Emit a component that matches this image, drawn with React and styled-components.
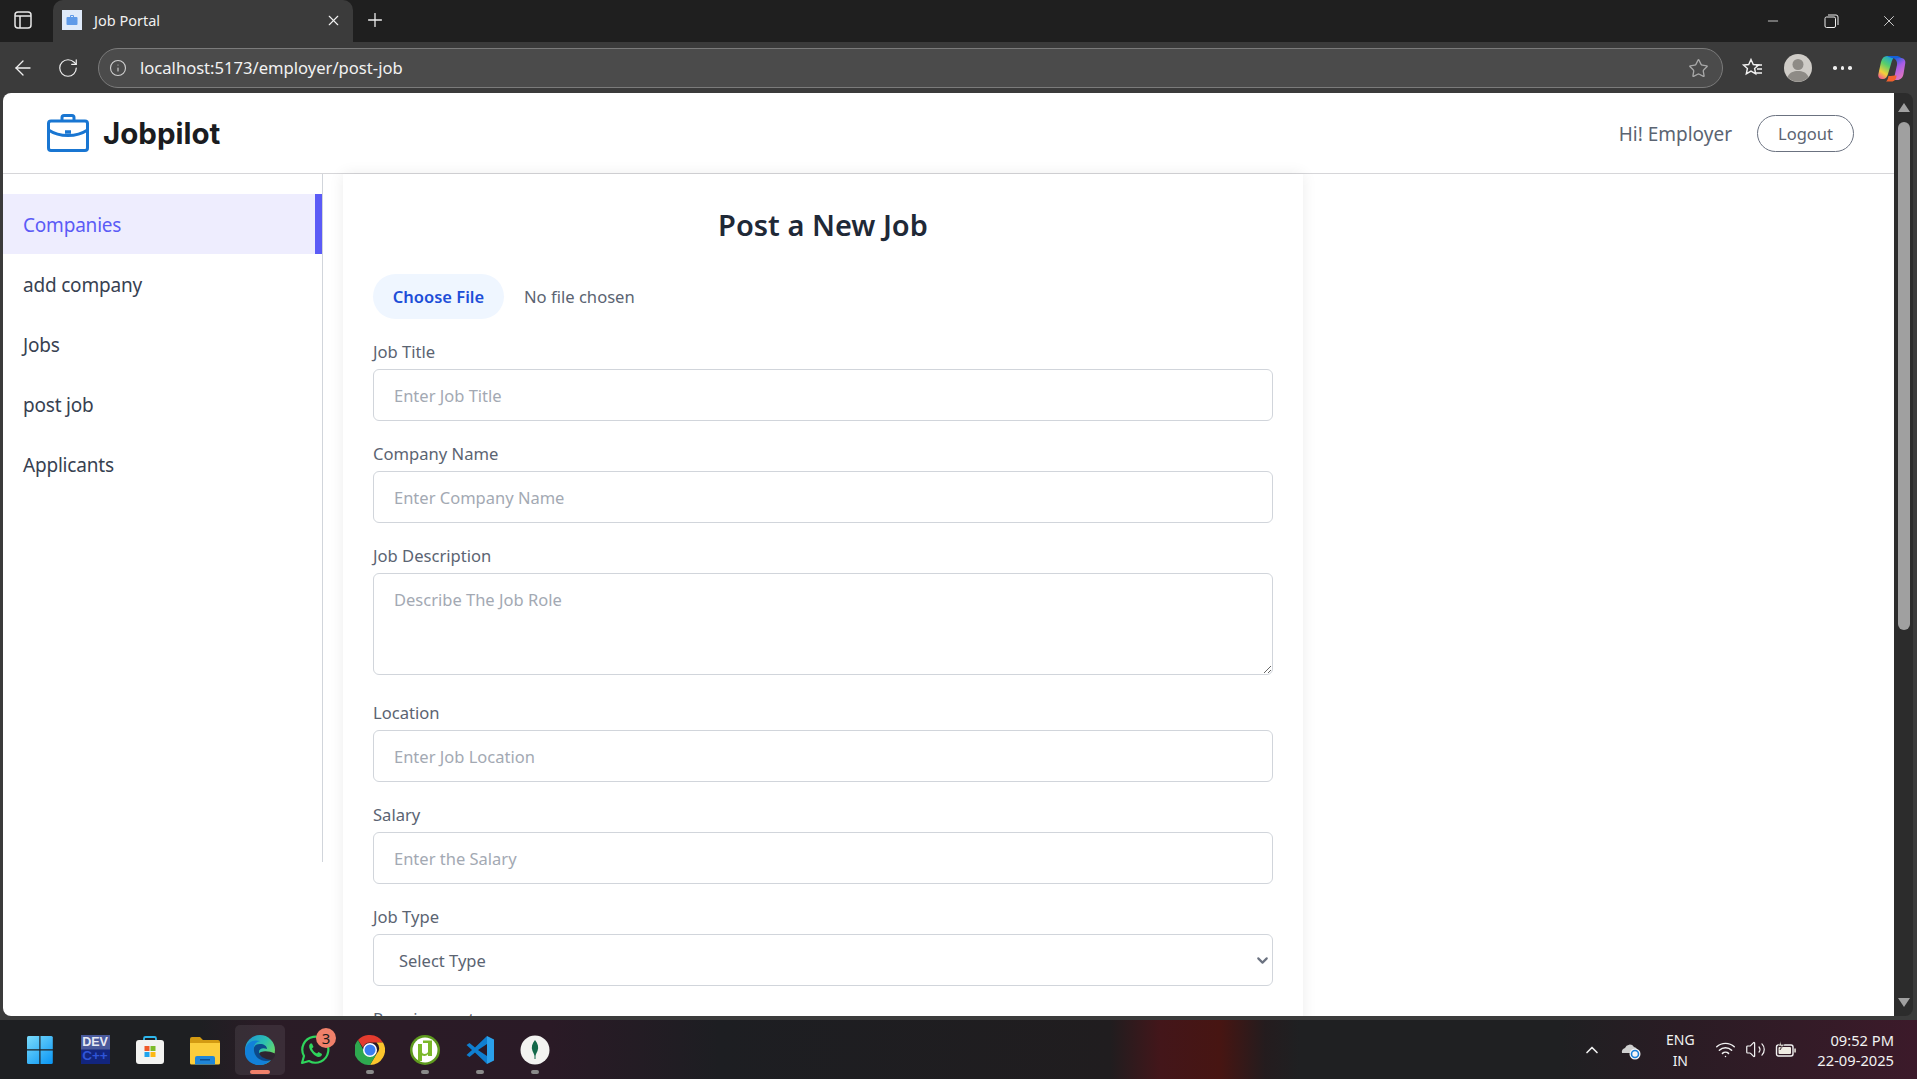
import React from 'react';
import styled, { createGlobalStyle } from 'styled-components';
import { ChevronUp, ChevronDown, Plus, Star, X, Minus, ArrowLeft, RotateCw, Info, Wifi, Volume2 } from 'lucide-react';

const GlobalStyle = createGlobalStyle`
  html, body {
    margin: 0;
    padding: 0;
    height: 100%;
    overflow: hidden;
    background: #3b3b3b;
  }
  * {
    box-sizing: border-box;
  }
`;

const uiFont = `"Noto Sans", "Open Sans", sans-serif`;
const sideItems = ['Companies', 'add company', 'Jobs', 'post job', 'Applicants'];

const Desktop = () => (
  <>
    <GlobalStyle />
    <Screen>
      <TabStrip>
        <StripButton>
          <svg width="20" height="20" viewBox="0 0 20 20" fill="none" stroke="#e8e8e8" strokeWidth="1.5">
            <rect x="2" y="2" width="16" height="16" rx="3" />
            <path d="M2 6h16M7 6v12" />
          </svg>
        </StripButton>
        <Tab>
          <Favicon>
            <svg width="12" height="12" viewBox="0 0 24 24" fill="#5f9ae8">
              <path d="M8 6V4a2 2 0 0 1 2-2h4a2 2 0 0 1 2 2v2h5a2 2 0 0 1 2 2v12a2 2 0 0 1-2 2H3a2 2 0 0 1-2-2V8a2 2 0 0 1 2-2zm2 0h4V4h-4z" />
            </svg>
          </Favicon>
          <TabTitle>Job Portal</TabTitle>
          <X size={17} color="#f2f2f2" strokeWidth={1.6} />
        </Tab>
        <NewTab>
          <Plus size={22} color="#eeeeee" strokeWidth={1.4} />
        </NewTab>
        <WindowControls>
          <WindowControl><Minus size={16} color="#eee" strokeWidth={1.2} /></WindowControl>
          <WindowControl>
            <svg width="15" height="15" viewBox="0 0 15 15" fill="none" stroke="#eee" strokeWidth="1">
              <rect x="1" y="3" width="10.5" height="10.5" rx="1.5" />
              <path d="M4 1h8a2 2 0 0 1 2 2v8" />
            </svg>
          </WindowControl>
          <WindowControl><X size={18} color="#eee" strokeWidth={1.1} /></WindowControl>
        </WindowControls>
      </TabStrip>

      <Toolbar>
        <ToolIcon><ArrowLeft size={24} color="#f0f0f0" strokeWidth={1.3} /></ToolIcon>
        <ToolIcon><RotateCw size={22} color="#f0f0f0" strokeWidth={1.3} /></ToolIcon>
        <AddressBar>
          <Info size={18} color="#cfcfcf" strokeWidth={1.5} />
          <AddressText>localhost:5173/employer/post-job</AddressText>
          <Star size={21} color="#a8a8a8" strokeWidth={1.5} />
        </AddressBar>
        <ToolRight>
          <svg width="22" height="22" viewBox="0 0 22 22" fill="none" stroke="#f2f2f2" strokeWidth="1.4">
            <path d="M10 2.500l2.300 5 5.200.5-3.900 3.500 1.100 5.300-4.700-2.700-4.700 2.700 1.100-5.300L2.500 8l5.200-.5z" />
            <path d="M15 8h6M16 12h5M15 16h6" />
          </svg>
          <Avatar>
            <svg width="28" height="28" viewBox="0 0 28 28">
              <circle cx="14" cy="14" r="14" fill="#cfccc7" />
              <circle cx="14" cy="10.500" r="5.500" fill="#8e8b86" />
              <path d="M3.500 23c2-4.500 6-6 10.500-6s8.500 1.500 10.500 6a14 14 0 0 1-21 0z" fill="#8e8b86" />
            </svg>
          </Avatar>
          <Dots>
            <i /><i /><i />
          </Dots>
          <CopilotMark>
            <svg width="28" height="27" viewBox="0 0 28 27">
              <defs>
                <linearGradient id="copA" x1="0.7" y1="0" x2="0.2" y2="1">
                  <stop offset="0" stopColor="#18a0dc" />
                  <stop offset="0.4" stopColor="#58cf6a" />
                  <stop offset="0.75" stopColor="#f4cf3a" />
                  <stop offset="1" stopColor="#f0608a" />
                </linearGradient>
                <linearGradient id="copB" x1="0.3" y1="0" x2="0.8" y2="1">
                  <stop offset="0" stopColor="#1560d8" />
                  <stop offset="0.4" stopColor="#a65ce8" />
                  <stop offset="1" stopColor="#ec7ab8" />
                </linearGradient>
              </defs>
              <path d="M9 1h9c-3 1-4 4-5 8l-3 10c-.8 3-2.500 5-5 5H4c-2.800 0-4.300-2.300-3.600-5L3 7c1-3.800 3-6 6-6z" fill="url(#copA)" />
              <path d="M15 3h8c2.800 0 4.700 2.300 4.300 5l-1.800 11c-.6 3.500-3 6-6.500 6h-7c3 0 4.500-2.500 5-6l2-9c.5-2.500-.5-6-4-7z" fill="url(#copB)" />
              <path d="M9 1h9c2 0 4 .5 5 2h-8c-1.500 0-3-.5-6-2z" fill="#1560d8" />
              <path d="M10.500 21c3 0 5.500-.5 8-.5 0 3-1.500 5.500-4 6H8c1.500-1 2-3 2.500-5.500z" fill="#f2622e" />
            </svg>
          </CopilotMark>
        </ToolRight>
      </Toolbar>

      <Viewport>
        <Page>
          <Header>
            <Brand>
              <svg width="42" height="38" viewBox="0 0 42 38" fill="none" stroke="#1976d2" strokeWidth="3">
                <path d="M15 7V3.500A2 2 0 0 1 17 1.500h8a2 2 0 0 1 2 2V7" />
                <rect x="1.500" y="7" width="39" height="29.500" rx="2.500" />
                <path d="M1.500 16c6 4 12 5.500 19.500 5.500S34.500 20 40.500 16" />
                <path d="M18 18h6" strokeWidth="3.500" />
              </svg>
              <BrandName>Jobpilot</BrandName>
            </Brand>
            <HeaderRight>
              <Greeting>Hi! Employer</Greeting>
              <LogoutButton>Logout</LogoutButton>
            </HeaderRight>
          </Header>
          <Body>
            <Sidebar>
              {sideItems.map((item, i) => (
                <SideItem key={item} $active={i === 0}>{item}</SideItem>
              ))}
            </Sidebar>
            <Card>
              <Title>Post a New Job</Title>
              <FileRow>
                <FileButton>Choose File</FileButton>
                <FileStatus>No file chosen</FileStatus>
              </FileRow>
              <Field>
                <Label>Job Title</Label>
                <Input placeholder="Enter Job Title" />
              </Field>
              <Field>
                <Label>Company Name</Label>
                <Input placeholder="Enter Company Name" />
              </Field>
              <Field>
                <Label>Job Description</Label>
                <TextArea placeholder="Describe The Job Role" />
              </Field>
              <Field>
                <Label>Location</Label>
                <Input placeholder="Enter Job Location" />
              </Field>
              <Field>
                <Label>Salary</Label>
                <Input placeholder="Enter the Salary" />
              </Field>
              <Field>
                <Label>Job Type</Label>
                <SelectWrap>
                  <SelectBox>
                    <option>Select Type</option>
                  </SelectBox>
                  <SelectChevron>
                    <ChevronDown size={17} color="#6b7280" strokeWidth={3} />
                  </SelectChevron>
                </SelectWrap>
              </Field>
              <Field>
                <Label>Requirements</Label>
              </Field>
            </Card>
          </Body>
        </Page>
        <ScrollBar>
          <ScrollArrow />
          <ScrollThumb />
          <ScrollArrow $down />
        </ScrollBar>
      </Viewport>

      <Taskbar>
        <TaskIcons>
          <TaskSlot>
            <svg width="30" height="30" viewBox="0 0 30 30">
              <defs>
                <linearGradient id="winTile" gradientUnits="userSpaceOnUse" x1="2" y1="1" x2="26" y2="29">
                  <stop offset="0" stopColor="#7bdcfc" />
                  <stop offset="1" stopColor="#0c97f4" />
                </linearGradient>
              </defs>
              <g fill="url(#winTile)">
                <path d="M2 2.500A1.500 1.500 0 0 1 3.500 1h10.800v13.300H2z" />
                <path d="M15.500 1h10.800a1.500 1.500 0 0 1 1.500 1.500v11.800H15.500z" />
                <path d="M2 15.500h12.300V29H3.500A1.500 1.500 0 0 1 2 27.500z" />
                <path d="M15.500 15.500h12.300v12A1.500 1.500 0 0 1 26.300 29H15.500z" />
              </g>
            </svg>
          </TaskSlot>
          <TaskSlot>
            <DevBadge>
              <span>DEV</span>
              <b>C++</b>
            </DevBadge>
          </TaskSlot>
          <TaskSlot>
            <svg width="30" height="30" viewBox="0 0 30 30">
              <path d="M9 6V3.500A1.500 1.500 0 0 1 10.500 2h9A1.500 1.500 0 0 1 21 3.500V6" fill="none" stroke="#2fb8ee" strokeWidth="1.800" />
              <rect x="1" y="5" width="28" height="24" rx="3" fill="#f3f3f1" />
              <rect x="9.500" y="11" width="5" height="5" fill="#ef5a2a" />
              <rect x="15.500" y="11" width="5" height="5" fill="#7cbb2a" />
              <rect x="9.500" y="17" width="5" height="5" fill="#1fa4ee" />
              <rect x="15.500" y="17" width="5" height="5" fill="#fdb813" />
            </svg>
          </TaskSlot>
          <TaskSlot>
            <svg width="30" height="30" viewBox="0 0 30 30">
              <path d="M0 4a2 2 0 0 1 2-2h8l3 3h15a2 2 0 0 1 2 2v4H0z" fill="#d39a12" />
              <path d="M0 8h30v20a1.500 1.500 0 0 1-1.500 1.500h-27A1.500 1.500 0 0 1 0 28z" fill="#fbcd3c" />
              <path d="M5 29.500V23a2 2 0 0 1 2-2h16a2 2 0 0 1 2 2v6.500z" fill="#1f86d8" />
              <rect x="10" y="24" width="10" height="1.500" fill="#0c4f92" />
            </svg>
          </TaskSlot>
          <TaskSlot $active>
            <svg width="30" height="30" viewBox="0 0 30 30">
              <defs>
                <linearGradient id="edgeTop" x1="0" y1="0" x2="1" y2="0.700">
                  <stop offset="0" stopColor="#1b8fd8" />
                  <stop offset="0.55" stopColor="#2cc0b0" />
                  <stop offset="1" stopColor="#74de5a" />
                </linearGradient>
              </defs>
              <circle cx="15" cy="15" r="15" fill="url(#edgeTop)" />
              <path d="M16 17c4-1.500 9-.5 14 1.500v2c-1 2.500-3 4.500-4 5-6 1-12-2-12-6 0-1 .5-2 2-2.500z" fill="#2e2530" />
              <path d="M0 17C0 8 8 4 15 6c-5 1-7 5-6 10 1 7 9 11 17 9a15 15 0 0 1-11 5C6 30 0 25 0 17z" fill="#1280d8" />
              <path d="M9 16c-1-5 2-7 6-7 4 0 7 2 7 5-4-1.500-8-.5-8 3 0 4 5 7 12 8-8 3-16-1.500-17-9z" fill="#0c4a8c" />
            </svg>
            <Marker $active />
          </TaskSlot>
          <TaskSlot>
            <svg width="30" height="30" viewBox="0 0 30 30" fill="none">
              <path d="M2 28l2-7A13 13 0 1 1 9 26z" stroke="#2fd45c" strokeWidth="2.200" strokeLinejoin="round" />
              <path d="M10.500 8.500c-1.500 1-2 3-.5 6s5 7 8.500 7.500c2 0 3.500-1 3.500-3l-3.500-2-1.500 1.500c-2-.5-4-2.500-5-5l1.500-1.500-1.500-3.500z" fill="#2fd45c" />
            </svg>
            <Badge>3</Badge>
          </TaskSlot>
          <TaskSlot>
            <svg width="30" height="30" viewBox="0 0 30 30">
              <path d="M15 0a15 15 0 0 1 13 7.500H15a7.500 7.500 0 0 0-7 5L3 5A15 15 0 0 1 15 0z" fill="#e33b2e" />
              <path d="M28 7.500A15 15 0 0 1 15 30l6.500-11a7.500 7.500 0 0 0 0-11.500z" fill="#fbc52c" />
              <path d="M3 5l6.500 12A7.500 7.500 0 0 0 21.500 19L15 30A15 15 0 0 1 3 5z" fill="#2ea84f" />
              <circle cx="15" cy="15" r="7" fill="#fff" />
              <circle cx="15" cy="15" r="5.500" fill="#3a7df0" />
            </svg>
            <Marker />
          </TaskSlot>
          <TaskSlot>
            <svg width="30" height="30" viewBox="0 0 30 30">
              <circle cx="15" cy="15" r="15" fill="#5e9a1e" />
              <circle cx="15" cy="15" r="12.500" fill="#fff" />
              <path d="M8 9h4v8c0 2.500 5 2.500 6 0V8h4v13h-4v-2c-1 2-4 2.500-6 1.500V26H8z" fill="#7bb82a" />
              <path d="M13 5.500h9V8h-9z" fill="#7bb82a" />
            </svg>
            <Marker />
          </TaskSlot>
          <TaskSlot>
            <svg width="30" height="30" viewBox="0 0 30 30">
              <path d="M22 1L10 12.500 4.500 8 1.500 10 7 15l-5.500 5 3 2 5.500-4.500L22 29v-8l-9-6 9-6z" fill="#0f7fd0" />
              <path d="M22 1l7 3.500v21L22 29z" fill="#2aa0ea" />
            </svg>
            <Marker />
          </TaskSlot>
          <TaskSlot>
            <svg width="30" height="30" viewBox="0 0 30 30">
              <circle cx="15" cy="15" r="14.500" fill="#f3f3f1" />
              <path d="M15 5c3 3.500 4 7.500 2.500 11-.8 2-1.700 3-2 5v3h-1v-3c-.3-2-1.200-3-2-5-1.500-3.500-.5-7.500 2.500-11z" fill="#13684a" />
            </svg>
            <Marker />
          </TaskSlot>
        </TaskIcons>
        <Tray>
          <ChevronUp size={20} color="#f0f0f0" strokeWidth={2} />
          <TrayCloud>
            <svg width="22" height="20" viewBox="0 0 22 20">
              <path d="M2 13a4 4 0 0 1 3-5 5 5 0 0 1 9-1 4 4 0 0 1 3 6z" fill="#cfcfcf" />
              <circle cx="15" cy="14" r="5.500" fill="#f5f5f5" />
              <circle cx="15" cy="14" r="3.500" fill="none" stroke="#1a7fd8" strokeWidth="1.600" />
            </svg>
          </TrayCloud>
          <Lang>
            <span>ENG</span>
            <span>IN</span>
          </Lang>
          <TrayIcons>
            <Wifi size={21} color="#f2f2f2" strokeWidth={1.7} />
            <Volume2 size={21} color="#f2f2f2" strokeWidth={1.4} />
            <svg width="22" height="20" viewBox="0 0 22 20" fill="#f0ede4" stroke="#f2f2f2" strokeWidth="1">
              <rect x="1.500" y="5" width="16.500" height="11" rx="2" fill="none" strokeWidth="1.400" />
              <rect x="3.500" y="7" width="12.500" height="7" rx="1" stroke="none" />
              <rect x="19.300" y="8.500" width="1.500" height="4" stroke="none" />
              <path d="M6 1L3.500 6h3L5 10l4-5.500H6z" stroke="#2c1d24" strokeWidth="0.600" />
            </svg>
          </TrayIcons>
          <Clock>
            <span>09:52 PM</span>
            <span>22-09-2025</span>
          </Clock>
        </Tray>
      </Taskbar>
    </Screen>
  </>
);

const Screen = styled.div`
  width: 1917px;
  height: 1079px;
  display: flex;
  flex-direction: column;
  overflow: hidden;
  background: #3b3b3b;
  font-family: ${uiFont};
`;

const TabStrip = styled.div`
  height: 42px;
  flex: none;
  display: flex;
  align-items: center;
  background: #1f1f1f;
`;

const StripButton = styled.div`
  width: 53px;
  height: 42px;
  padding: 0 0 2px 13px;
  display: flex;
  align-items: center;
`;

const Tab = styled.div`
  width: 300px;
  height: 42px;
  padding: 0 11px 2px 9px;
  display: flex;
  align-items: center;
  background: #3b3b3b;
  border-radius: 10px 10px 0 0;
`;

const Favicon = styled.div`
  width: 20px;
  height: 20px;
  margin-right: 12px;
  display: flex;
  align-items: center;
  justify-content: center;
  background: #dfeafa;
`;

const TabTitle = styled.span`
  flex: 1;
  padding-bottom: 1px;
  font-size: 14.5px;
  color: #f0f0f0;
`;

const NewTab = styled.div`
  margin: 0 0 2px 11px;
  display: flex;
`;

const WindowControls = styled.div`
  margin-left: auto;
  margin-right: -1px;
  display: flex;
`;

const WindowControl = styled.div`
  width: 58px;
  height: 40px;
  display: flex;
  align-items: center;
  justify-content: center;
`;

const Toolbar = styled.div`
  height: 51px;
  flex: none;
  padding-top: 1px;
  display: flex;
  align-items: center;
  background: #3b3b3b;
`;

const ToolIcon = styled.div`
  width: 45px;
  flex: none;
  display: flex;
  justify-content: center;
`;

const AddressBar = styled.div`
  width: 1625px;
  height: 40px;
  flex: none;
  margin-left: 8px;
  padding: 0 13px 0 10px;
  display: flex;
  align-items: center;
  background: #4b4b4b;
  border: 1px solid #7b7b7b;
  border-radius: 20px;
`;

const AddressText = styled.span`
  flex: 1;
  margin-left: 13px;
  padding-bottom: 2px;
  font-size: 16.6px;
  color: #f2f2f2;
`;

const ToolRight = styled.div`
  flex: 1;
  padding-left: 18px;
  display: flex;
  align-items: center;
  gap: 21px;
`;

const Avatar = styled.div`
  display: flex;
`;

const Dots = styled.div`
  display: flex;
  gap: 4px;

  i {
    width: 3.500px;
    height: 3.500px;
    border-radius: 50%;
    background: #eee;
  }
`;

const CopilotMark = styled.div`
  margin-left: 5px;
  display: flex;
`;

const Viewport = styled.div`
  flex: 1;
  min-height: 0;
  padding: 0 4px 4px 3px;
  display: flex;
  background: #3b3b3b;
`;

const Page = styled.main`
  flex: 1;
  height: 923px;
  overflow: hidden;
  background: #fff;
  border-radius: 8px 0 0 8px;
`;

const Header = styled.header`
  height: 81px;
  padding: 0 40px 0 44px;
  display: flex;
  align-items: center;
  justify-content: space-between;
  border-bottom: 1px solid #d6d6d9;
`;

const Brand = styled.div`
  display: flex;
  align-items: center;
  gap: 14px;
`;

const BrandName = styled.h1`
  margin: 0;
  font-family: Inter, sans-serif;
  font-size: 29.5px;
  font-weight: 700;
  color: #1a1c20;
`;

const HeaderRight = styled.div`
  display: flex;
  align-items: center;
  gap: 25px;
`;

const Greeting = styled.span`
  padding-top: 1px;
  font-size: 19px;
  color: #5b6472;
`;

const LogoutButton = styled.button`
  width: 97px;
  height: 37px;
  padding: 0;
  font-family: inherit;
  font-size: 16.5px;
  color: #5b6472;
  background: #fff;
  border: 1px solid #6b7280;
  border-radius: 19px;
`;

const Body = styled.div`
  display: flex;
  align-items: flex-start;
`;

const Sidebar = styled.aside`
  width: 320px;
  height: 688px;
  flex: none;
  padding-top: 20px;
  border-right: 1px solid #d1d5db;
`;

const SideItem = styled.div`
  height: 60px;
  padding: 2px 0 0 20px;
  display: flex;
  align-items: center;
  font-size: 19px;
  letter-spacing: -0.2px;
  color: ${(p) => (p.$active ? '#5b5bf6' : '#374151')};
  background: ${(p) => (p.$active ? '#eeedfe' : 'transparent')};
  border-right: 7px solid ${(p) => (p.$active ? '#5b5bf6' : 'transparent')};
`;

const Card = styled.section`
  width: 960px;
  margin-left: 20px;
  padding: 0 30px;
  background: #fff;
  box-shadow: 0 0 14px rgba(0, 0, 0, 0.08);
`;

const Title = styled.h2`
  margin: 0;
  padding-top: 31px;
  height: 100px;
  font-size: 29px;
  line-height: 40px;
  font-weight: 600;
  text-align: center;
  color: #1f2937;
`;

const FileRow = styled.div`
  display: flex;
  align-items: center;
  gap: 20px;
  margin-bottom: 19px;
`;

const FileButton = styled.div`
  width: 131px;
  height: 45px;
  display: flex;
  align-items: center;
  justify-content: center;
  font-size: 16.5px;
  font-weight: 600;
  color: #1d4ed8;
  background: #eff6ff;
  border-radius: 23px;
`;

const FileStatus = styled.span`
  font-size: 16.6px;
  color: #5b6472;
`;

const Field = styled.div`
  margin-bottom: 19px;
`;

const Label = styled.label`
  display: block;
  height: 28px;
  margin-bottom: 3px;
  font-size: 16.6px;
  line-height: 28px;
  color: #5b6472;
`;

const Input = styled.input`
  display: block;
  width: 100%;
  height: 52px;
  padding: 0 20px;
  font-family: inherit;
  font-size: 16.5px;
  color: #374151;
  background: #fff;
  border: 1px solid #d1d5db;
  border-radius: 6px;

  &::placeholder {
    color: #a3a9b3;
  }
`;

const TextArea = styled.textarea`
  display: block;
  width: 100%;
  height: 102px;
  margin-bottom: 24px;
  padding: 14px 20px;
  font-family: inherit;
  font-size: 16.5px;
  background: #fff;
  border: 1px solid #d1d5db;
  border-radius: 6px;

  &::placeholder {
    color: #a3a9b3;
  }
`;

const SelectWrap = styled.div`
  position: relative;
`;

const SelectBox = styled.select`
  display: block;
  width: 100%;
  height: 52px;
  padding: 0 40px 0 25px;
  appearance: none;
  font-family: inherit;
  font-size: 16.5px;
  color: #5b6472;
  background: #fff;
  border: 1px solid #d1d5db;
  border-radius: 6px;
`;

const SelectChevron = styled.span`
  position: absolute;
  top: 18px;
  right: 2px;
  display: flex;
`;

const ScrollBar = styled.div`
  width: 19px;
  height: 923px;
  flex: none;
  padding: 10px 0 9px;
  display: flex;
  flex-direction: column;
  align-items: center;
  background: #2c2c2c;
  border-radius: 0 8px 8px 0;
`;

const ScrollArrow = styled.div`
  width: 0;
  height: 0;
  border-left: 6px solid transparent;
  border-right: 6px solid transparent;
  ${(p) => (p.$down ? 'border-top: 9px solid #a0a0a0; margin-top: auto;' : 'border-bottom: 9px solid #a0a0a0;')}
`;

const ScrollThumb = styled.div`
  width: 12px;
  height: 508px;
  margin-top: 10px;
  background: #a0a0a0;
  border-radius: 6px;
`;

const Taskbar = styled.footer`
  height: 59px;
  flex: none;
  padding: 0 23px 0 15px;
  display: flex;
  align-items: center;
  justify-content: space-between;
  background: linear-gradient(
    90deg,
    #1e1f22 0,
    #1e1f22 200px,
    #2a1c26 260px,
    #2a1a26 550px,
    #1d1e22 720px,
    #201d1f 1110px,
    #43161a 1160px,
    #471512 1220px,
    #241c1e 1265px,
    #1f2022 1300px,
    #1f2022 1560px,
    #2a1c24 1680px,
    #3c1a2a 1917px
  );
`;

const TaskIcons = styled.div`
  display: flex;
  align-items: center;
  gap: 5px;
`;

const TaskSlot = styled.div`
  position: relative;
  width: 50px;
  height: 50px;
  display: flex;
  align-items: center;
  justify-content: center;
  border-radius: 5px;
  background: ${(p) => (p.$active ? 'rgba(255, 255, 255, 0.08)' : 'transparent')};
`;

const Marker = styled.i`
  position: absolute;
  left: 50%;
  bottom: 1px;
  width: ${(p) => (p.$active ? '20px' : '8px')};
  height: 4px;
  transform: translateX(-50%);
  border-radius: 2px;
  background: ${(p) => (p.$active ? '#f0806a' : '#8a8a8a')};
`;

const Badge = styled.span`
  position: absolute;
  top: 3px;
  right: 4px;
  width: 20px;
  height: 20px;
  display: flex;
  align-items: center;
  justify-content: center;
  font-size: 15px;
  color: #1a1a1a;
  background: #f0806a;
  border-radius: 50%;
`;

const DevBadge = styled.div`
  width: 29px;
  height: 29px;
  display: flex;
  flex-direction: column;
  align-items: center;
  overflow: hidden;
  font-family: "Liberation Sans", sans-serif;
  font-size: 12.5px;
  line-height: 14px;
  font-weight: 700;
  color: #e8eaf4;
  background: linear-gradient(#4a5a9c 0, #4a5a9c 48%, #12257e 52%, #12257e 100%);

  b {
    color: #2f55d8;
    font-size: 13.500px;
  }
`;

const Tray = styled.div`
  display: flex;
  align-items: center;
  color: #f2f2f2;
`;

const TrayCloud = styled.div`
  margin-left: 18px;
  display: flex;
`;

const Lang = styled.div`
  width: 40px;
  margin-left: 18px;
  display: flex;
  flex-direction: column;
  align-items: center;
  font-size: 14px;
  line-height: 21px;
`;

const TrayIcons = styled.div`
  margin-left: 15px;
  display: flex;
  align-items: center;
  gap: 9px;
`;

const Clock = styled.div`
  margin-left: 20px;
  display: flex;
  flex-direction: column;
  align-items: flex-end;
  font-size: 14.7px;
  line-height: 20px;
`;

export default Desktop;
